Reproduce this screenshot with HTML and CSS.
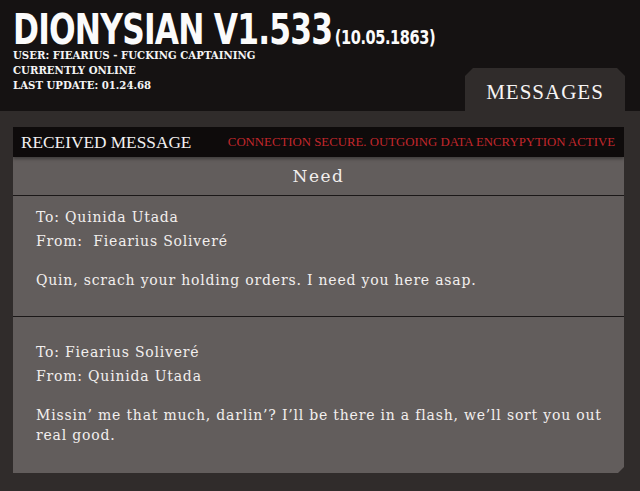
FILE: index.html
```html
<!DOCTYPE html>
<html>
  <head>
    <link rel="stylesheet" href="styles.css">
  </head>
  <body>
  <header class='top'>
    <div class='ship'>
      <h1 class='title'>DIONYSIAN V1.533<span class='stardate'>(10.05.1863)</span></h1>
      <p class='status'>USER: FIEARIUS - FUCKING CAPTAINING</p>
      <p class='status'>CURRENTLY ONLINE</p>
      <p class='status'>LAST UPDATE: 01.24.68</p>
    </div>
    <nav class='tab'>MESSAGES</nav>
  </header>
  <main class='content'>
    <section class='panel'>
      <div class='panel-head'>
        <span class='panel-title'>RECEIVED MESSAGE</span>
        <span class='secure'>CONNECTION SECURE. OUTGOING DATA ENCRYPYTION ACTIVE</span>
      </div>
      <h2 class='subject'>Need</h2>
      <article class='message'>
        <p class='meta'>To: Quinida Utada</p>
        <p class='meta'>From:&nbsp; Fiearius Soliveré</p>
        <p class='body'>Quin, scrach your holding orders. I need you here asap.</p>
      </article>
      <article class='message reply'>
        <p class='meta'>To: Fiearius Soliveré</p>
        <p class='meta'>From: Quinida Utada</p>
        <p class='body'>Missin’ me that much, darlin’? I’ll be there in a flash, we’ll sort you out real good.</p>
      </article>
    </section>
  </main>
  </body>
</html>
```

FILE: styles.css
```css
* {
  box-sizing: border-box;
}
html, body {
  margin: 0;
  height: 100%;
}
body {
  background-color: #302c2b;
  color: #f2efee;
  display: flex;
  flex-direction: column;
}
p, h1, h2 {
  margin: 0;
}

/* Header */
.top {
  height: 111px;
  flex-shrink: 0;
  background-color: #151212;
  display: flex;
  justify-content: space-between;
  align-items: flex-end;
  padding: 0 15px 0 13px;
}
.ship {
  flex: 1;
  min-width: 0;
  align-self: flex-start;
  padding-top: 10px;
}
.title {
  font-family: "DejaVu Sans", sans-serif;
  font-stretch: condensed;
  font-weight: bold;
  font-size: 43px;
  line-height: 38px;
  letter-spacing: -1px;
  white-space: nowrap;
  transform: scaleX(0.81);
  transform-origin: left;
  color: #fbfbfb;
}
.stardate {
  font-size: 20px;
  line-height: 1;
  letter-spacing: -0.5px;
  margin-left: 3px;
}
.status {
  font-family: "DejaVu Serif", serif;
  font-stretch: condensed;
  font-weight: bold;
  font-size: 11.3px;
  line-height: 15px;
  color: #f4f4f4;
}
.tab {
  width: 160px;
  height: 43px;
  flex-shrink: 0;
  background-color: #302c2b;
  clip-path: polygon(8px 0, calc(100% - 8px) 0, 100% 8px, 100% 100%, 0 100%, 0 8px);
  font-family: "Liberation Serif", serif;
  font-size: 21px;
  letter-spacing: 1px;
  text-align: center;
  padding-top: 12px;
  color: #f6f4f4;
}

/* Panel */
.content {
  flex: 1;
  padding: 16px 16px 18px 13px;
}
.panel {
  height: 100%;
  background-color: #625d5c;
  clip-path: polygon(0 0, 100% 0, 100% calc(100% - 6px), calc(100% - 6px) 100%, 0 100%);
}
.panel-head {
  height: 30px;
  background-color: #0e0b0b;
  display: flex;
  justify-content: space-between;
  align-items: center;
  padding: 1px 9px 0 8px;
  box-shadow: 0 2px 3px rgba(0, 0, 0, 0.35);
  position: relative;
}
.panel-title {
  font-family: "Liberation Serif", serif;
  font-size: 17.3px;
  color: #f2f0f0;
}
.secure {
  font-family: "Liberation Serif", serif;
  font-size: 12.8px;
  color: #c2272b;
}
.subject {
  height: 39px;
  border-bottom: 1px solid #1b1818;
  font-family: "DejaVu Serif", serif;
  font-weight: normal;
  font-size: 17px;
  letter-spacing: 1.5px;
  text-align: center;
  line-height: 38px;
}
.message {
  font-family: "DejaVu Serif", serif;
  font-size: 14px;
  letter-spacing: 0.8px;
  padding: 9px 10px 26px 23px;
  border-bottom: 1px solid #1b1818;
}
.message.reply {
  padding-top: 23px;
  border-bottom: none;
}
.meta {
  line-height: 24px;
}
.body {
  line-height: 20px;
  margin-top: 17px;
}
```
